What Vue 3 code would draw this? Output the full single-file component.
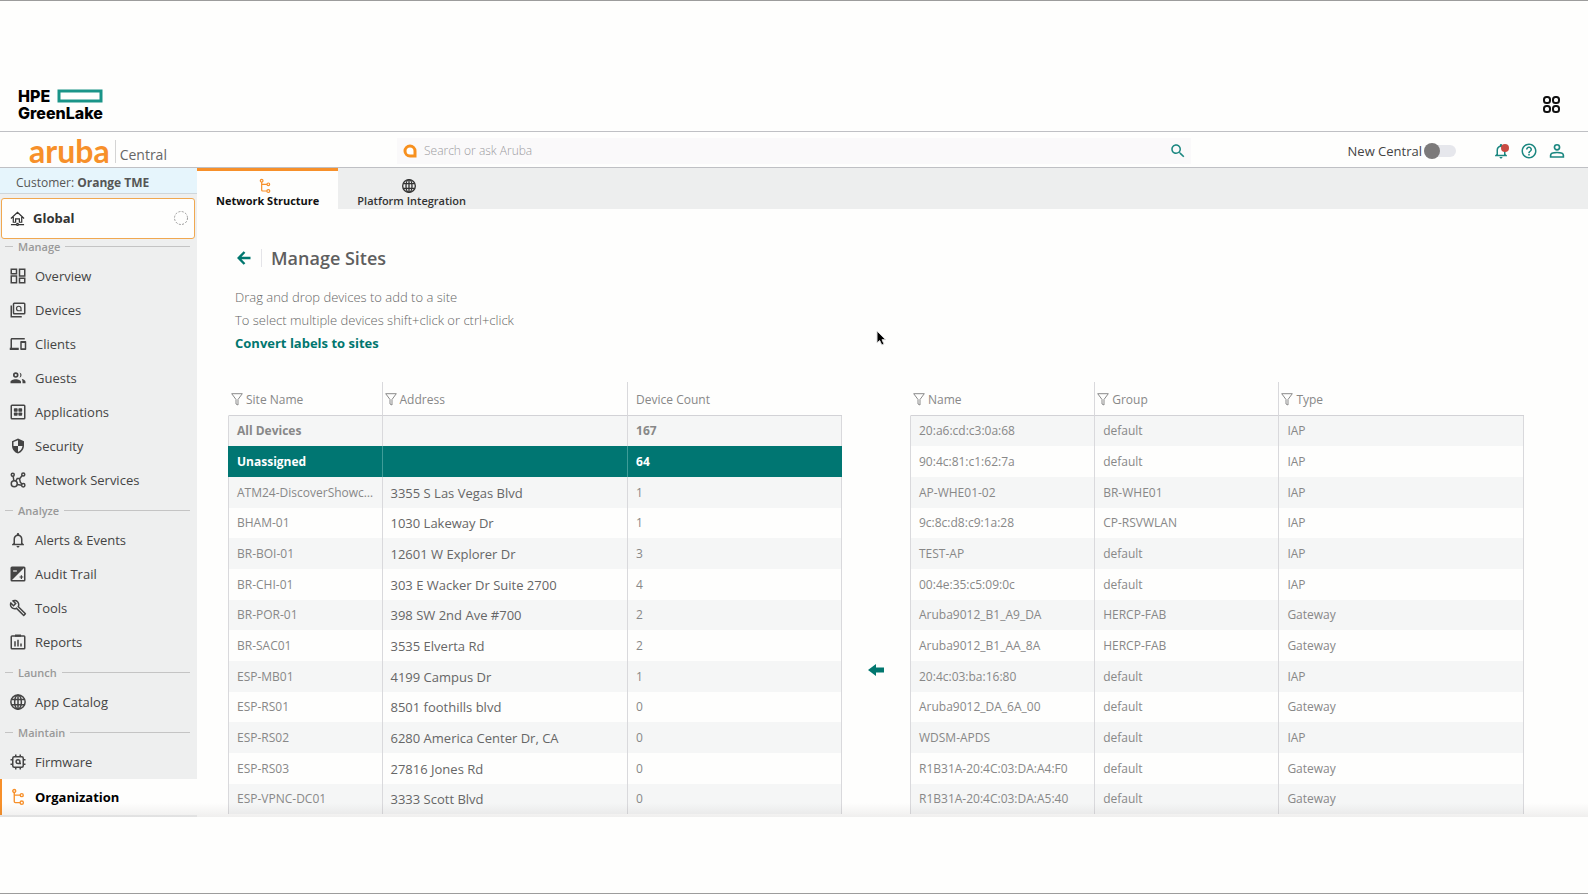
<script setup>
import { ref } from 'vue'

const icons = {
  overview: '<g fill="none" stroke="currentColor" stroke-width="2"><rect x="3" y="3" width="7" height="6"/><rect x="3" y="12" width="7" height="9"/><rect x="14" y="3" width="7" height="9"/><rect x="14" y="15" width="7" height="6"/></g>',
  devices: '<g fill="none" stroke="currentColor" stroke-width="2"><rect x="6" y="3" width="15" height="14" rx="1"/><path d="M3 6v15h14"/><path d="M16 13V10a3 3 0 1 0-3 3h4" stroke-width="1.6"/></g>',
  clients: '<path fill="currentColor" d="M4 6h17V4H4c-1.100 0-2 .9-2 2v11H1v3h12v-3H4V6zm18 2h-6c-.55 0-1 .45-1 1v10c0 .55.45 1 1 1h6c.55 0 1-.45 1-1V9c0-.55-.45-1-1-1zm-1 9.500h-4v-7h4v7z"/>',
  guests: '<circle cx="9" cy="8" r="2.600" fill="none" stroke="currentColor" stroke-width="2.200"/><path fill="currentColor" d="M2 19v-2c0-2 3.500-3.500 7-3.500s7 1.500 7 3.500v2zM14 4.500a3.600 3.600 0 0 1 0 7c1.500-2 1.500-5 0-7zM17 13.200c2.500.5 5 1.600 5 3.800v2h-4v-2c0-1.600-.4-2.900-1-3.800z"/>',
  applications: '<rect x="3" y="3" width="18" height="18" rx="1" fill="none" stroke="currentColor" stroke-width="2"/><g fill="currentColor"><rect x="6.500" y="7" width="5" height="4.500" rx="1"/><rect x="12.500" y="7" width="5" height="4.500" rx="1"/><rect x="6.500" y="12.500" width="5" height="4.500" rx="1"/><rect x="12.500" y="12.500" width="5" height="4.500" rx="1"/></g>',
  security: '<path fill="currentColor" d="M12 2L4 5.500v5.800c0 5 3.400 9.600 8 10.700 4.600-1.100 8-5.700 8-10.700V5.500L12 2zm0 10h6c-.5 3.700-2.900 6.900-6 7.900V12H6V6.800l6-2.600V12z"/>',
  network: '<g fill="none" stroke="currentColor" stroke-width="2"><circle cx="5" cy="5" r="2"/><circle cx="19" cy="4.500" r="2"/><circle cx="7" cy="17" r="4"/><circle cx="19" cy="19" r="2.200"/><path d="M5.500 7l1 6M17.500 6l-3 4H11l-2 3.500M14 10l1 5 2.500 2.500M11 18l6 1"/></g>',
  bell: '<path fill="currentColor" d="M12 22c1.100 0 2-.9 2-2h-4c0 1.100.9 2 2 2zm6-6v-5c0-3.070-1.630-5.640-4.500-6.320V4c0-.83-.67-1.500-1.500-1.500s-1.500.67-1.500 1.500v.68C7.640 5.360 6 7.920 6 11v5l-2 2v1h16v-1l-2-2zm-2 1H8v-6c0-2.480 1.510-4.500 4-4.500s4 2.020 4 4.500v6z"/>',
  audit: '<rect x="3" y="3" width="18" height="18" rx="1" fill="none" stroke="currentColor" stroke-width="2"/><path fill="currentColor" d="M3 3h18L3 21z"/><path d="M5.500 8h5" stroke="#eeefef" stroke-width="1.600"/><path d="M14 16h5M16.500 13.500v5" stroke="currentColor" stroke-width="1.600"/>',
  tools: '<path fill="currentColor" d="M22.610 18.990l-9.080-9.080c.93-2.340.45-5.100-1.440-7C9.790.61 6.210.4 3.660 2.260L7.500 6.110 6.080 7.520 2.250 3.690C.39 6.230.6 9.820 2.900 12.110c1.860 1.860 4.570 2.350 6.890 1.480l9.110 9.110c.39.39 1.020.39 1.410 0l2.300-2.300c.4-.38.4-1.010 0-1.410zm-3 1.600l-9.460-9.460c-.61.45-1.290.72-2 .82-1.360.2-2.790-.21-3.830-1.250C3.370 9.760 2.930 8.500 3 7.260l3.090 3.090 4.240-4.240-3.090-3.090c1.240-.07 2.490.37 3.440 1.310 1.080 1.080 1.490 2.570 1.240 3.960-.12.71-.42 1.370-.88 1.960l9.450 9.450-.88.89z"/>',
  reports: '<g fill="none" stroke="currentColor" stroke-width="2"><rect x="3" y="4" width="18" height="17" rx="1"/><path d="M8 11v7M12 9v9M16 14v4"/></g><path fill="currentColor" d="M8 2h8v3H8z"/>',
  globe: '<g fill="none" stroke="currentColor" stroke-width="2"><circle cx="12" cy="12" r="9.500"/><ellipse cx="12" cy="12" rx="4.500" ry="9.500"/><path d="M3.500 8.500h17M3.500 15.500h17M12 2.500v19"/></g>',
  firmware: '<g fill="none" stroke="currentColor" stroke-width="2"><rect x="5" y="5" width="14" height="14" rx="2"/><path d="M9 2v3M15 2v3M9 19v3M15 19v3M2 9h3M2 15h3M19 9h3M19 15h3M14.500 14v-2.500a2.500 2.500 0 1 0-2.500 2.500h4"/></g>',
  tree: '<g fill="none" stroke="currentColor" stroke-width="1.800"><circle cx="7" cy="4" r="2"/><circle cx="17" cy="9.500" r="2"/><circle cx="17" cy="19.500" r="2.200"/><path d="M7 6v12q0 1.500 1.500 1.500H14.800M7 9.500h8"/></g>',
  help: '<path fill="currentColor" d="M11 18h2v-2h-2v2zm1-16C6.480 2 2 6.480 2 12s4.480 10 10 10 10-4.480 10-10S17.520 2 12 2zm0 18c-4.410 0-8-3.590-8-8s3.590-8 8-8 8 3.590 8 8-3.590 8-8 8zm0-14c-2.210 0-4 1.790-4 4h2c0-1.100.9-2 2-2s2 .9 2 2c0 2-3 1.750-3 5h2c0-2.250 3-2.500 3-5 0-2.210-1.790-4-4-4z"/>',
  person: '<g fill="none" stroke="currentColor" stroke-width="2.200"><circle cx="12" cy="7" r="3.400"/><path d="M3.500 20v-2.500c0-2 4-3.500 8.500-3.500s8.500 1.500 8.500 3.500V20z"/></g>',
  search: '<path fill="currentColor" d="M15.500 14h-.79l-.28-.27C15.410 12.590 16 11.110 16 9.500 16 5.910 13.090 3 9.500 3S3 5.910 3 9.500 5.910 16 9.500 16c1.610 0 3.090-.59 4.230-1.570l.27.28v.79l5 4.990L20.490 19l-4.990-5zm-6 0C7.010 14 5 11.990 5 9.500S7.010 5 9.500 5 14 7.010 14 9.500 11.990 14 9.500 14z"/>',
}

const navGroups = [
  {
    title: 'Manage',
    items: [
      { label: 'Overview', icon: 'overview' },
      { label: 'Devices', icon: 'devices' },
      { label: 'Clients', icon: 'clients' },
      { label: 'Guests', icon: 'guests' },
      { label: 'Applications', icon: 'applications' },
      { label: 'Security', icon: 'security' },
      { label: 'Network Services', icon: 'network' },
    ],
  },
  {
    title: 'Analyze',
    items: [
      { label: 'Alerts & Events', icon: 'bell' },
      { label: 'Audit Trail', icon: 'audit' },
      { label: 'Tools', icon: 'tools' },
      { label: 'Reports', icon: 'reports' },
    ],
  },
  { title: 'Launch', items: [{ label: 'App Catalog', icon: 'globe' }] },
  {
    title: 'Maintain',
    items: [
      { label: 'Firmware', icon: 'firmware' },
      { label: 'Organization', icon: 'tree', active: true },
    ],
  },
]

const sites = [
  ['All Devices', '', '167'],
  ['Unassigned', '', '64'],
  ['ATM24-DiscoverShowcase', '3355 S Las Vegas Blvd', '1'],
  ['BHAM-01', '1030 Lakeway Dr', '1'],
  ['BR-BOI-01', '12601 W Explorer Dr', '3'],
  ['BR-CHI-01', '303 E Wacker Dr Suite 2700', '4'],
  ['BR-POR-01', '398 SW 2nd Ave #700', '2'],
  ['BR-SAC01', '3535 Elverta Rd', '2'],
  ['ESP-MB01', '4199 Campus Dr', '1'],
  ['ESP-RS01', '8501 foothills blvd', '0'],
  ['ESP-RS02', '6280 America Center Dr, CA', '0'],
  ['ESP-RS03', '27816 Jones Rd', '0'],
  ['ESP-VPNC-DC01', '3333 Scott Blvd', '0'],
]

const devices = [
  ['20:a6:cd:c3:0a:68', 'default', 'IAP'],
  ['90:4c:81:c1:62:7a', 'default', 'IAP'],
  ['AP-WHE01-02', 'BR-WHE01', 'IAP'],
  ['9c:8c:d8:c9:1a:28', 'CP-RSVWLAN', 'IAP'],
  ['TEST-AP', 'default', 'IAP'],
  ['00:4e:35:c5:09:0c', 'default', 'IAP'],
  ['Aruba9012_B1_A9_DA', 'HERCP-FAB', 'Gateway'],
  ['Aruba9012_B1_AA_8A', 'HERCP-FAB', 'Gateway'],
  ['20:4c:03:ba:16:80', 'default', 'IAP'],
  ['Aruba9012_DA_6A_00', 'default', 'Gateway'],
  ['WDSM-APDS', 'default', 'IAP'],
  ['R1B31A-20:4C:03:DA:A4:F0', 'default', 'Gateway'],
  ['R1B31A-20:4C:03:DA:A5:40', 'default', 'Gateway'],
]

const tables = [
  { id: 'sites', columns: ['Site Name', 'Address', 'Device Count'], filters: [true, true, false], rows: sites },
  { id: 'devices', columns: ['Name', 'Group', 'Type'], filters: [true, true, true], rows: devices },
]

const selectedSite = ref('Unassigned')
const newCentral = ref(false)
const query = ref('')
</script>

<template>
  <div class="page">
    <header class="greenlake">
      <a class="hpe" href="#">
        <span class="hpe-row">HPE<svg class="hpe-bar" viewBox="0 0 46 14"><rect x="2" y="2" width="42" height="10" fill="none" stroke="#1a9488" stroke-width="3" /></svg></span>
        <span>GreenLake</span>
      </a>
      <button class="icon-btn" type="button" aria-label="Applications">
        <svg class="apps" viewBox="0 0 18 18" fill="none" stroke="#111" stroke-width="2">
          <rect x="1" y="1" width="6" height="6" rx="2.500" /><rect x="10" y="1" width="6" height="6" rx="2.500" />
          <rect x="1" y="10" width="6" height="6" rx="2.500" /><rect x="10" y="10" width="6" height="6" rx="2.500" />
        </svg>
      </button>
    </header>

    <div class="topbar">
      <a class="brand" href="#"><span class="aruba">aruba</span><span class="central">Central</span></a>
      <form class="search" role="search" @submit.prevent>
        <svg class="ask" viewBox="0 0 14 14"><path d="M7 2a5 5 0 1 0 0 10h5V7a5 5 0 0 0-5-5z" fill="#fff" stroke="#f7901e" stroke-width="3" /></svg>
        <input v-model="query" type="text" placeholder="Search or ask Aruba" aria-label="Search or ask Aruba" />
        <button class="icon-btn teal" type="submit" aria-label="Search"><svg class="i18" viewBox="0 0 24 24" v-html="icons.search"></svg></button>
      </form>
      <div class="tools">
        <label class="toggle">New Central<input v-model="newCentral" type="checkbox" /></label>
        <div class="actions">
          <button class="icon-btn teal alert" type="button" aria-label="Notifications"><svg class="i18" viewBox="0 0 24 24" v-html="icons.bell"></svg><i class="dot"></i></button>
          <button class="icon-btn teal" type="button" aria-label="Help"><svg class="i18" viewBox="0 0 24 24" v-html="icons.help"></svg></button>
          <button class="icon-btn teal" type="button" aria-label="Account"><svg class="i18" viewBox="0 0 24 24" v-html="icons.person"></svg></button>
        </div>
      </div>
    </div>

    <div class="shell">
      <aside class="sidebar">
        <div class="customer">Customer: <b>Orange TME</b></div>
        <button class="scope" type="button">
          <svg class="home" viewBox="0 0 16 16" fill="none" stroke="#333" stroke-width="1.300">
            <path d="M1 8l7-6.500L15 8M3.500 6.500V12H6V8.500h4V12h2.500V6.500M1 14.500h5.500M9.500 14.500H15" /><circle cx="8" cy="14.300" r="1" />
          </svg>
          <span>Global</span>
          <svg class="ring" viewBox="0 0 16 16"><circle cx="8" cy="8" r="6.500" fill="none" stroke="#999" stroke-dasharray="2 1.400" /></svg>
        </button>
        <nav>
          <section v-for="group in navGroups" :key="group.title">
            <h2>{{ group.title }}</h2>
            <a v-for="item in group.items" :key="item.label" href="#" :class="{ active: item.active }">
              <svg class="i18" viewBox="0 0 24 24" v-html="icons[item.icon]"></svg>{{ item.label }}
            </a>
          </section>
        </nav>
      </aside>

      <main>
        <div class="tabs" role="tablist">
          <button class="tab on" type="button" role="tab" aria-selected="true"><svg class="i16" viewBox="0 0 24 24" v-html="icons.tree"></svg>Network Structure</button>
          <button class="tab" type="button" role="tab" aria-selected="false"><svg class="i16" viewBox="0 0 24 24" v-html="icons.globe"></svg>Platform Integration</button>
        </div>

        <div class="content">
          <div class="heading">
            <button class="icon-btn" type="button" aria-label="Back">
              <svg class="back" viewBox="0 0 14 14" fill="none" stroke="#01776f" stroke-width="2.400"><path d="M13.500 7H2M7.500 1L1.700 7l5.800 6" /></svg>
            </button>
            <h1>Manage Sites</h1>
          </div>
          <p>Drag and drop devices to add to a site</p>
          <p>To select multiple devices shift+click or ctrl+click</p>
          <a class="convert" href="#">Convert labels to sites</a>

          <div class="grids">
            <template v-for="(table, t) in tables" :key="table.id">
              <table :class="table.id">
                <colgroup><col /><col /><col /></colgroup>
                <thead>
                  <tr>
                    <th v-for="(name, c) in table.columns" :key="name" scope="col" :class="{ filterable: table.filters[c] }">
                      <div class="th">
                        <button v-if="table.filters[c]" class="icon-btn" type="button" :aria-label="'Filter ' + name">
                          <svg class="funnel" viewBox="0 0 12 13" fill="none" stroke="#8a8a8a"><path d="M.7.7h10.600L7 6.500V12L5 11V6.500z" /></svg>
                        </button>
                        {{ name }}
                      </div>
                    </th>
                  </tr>
                </thead>
                <tbody>
                  <tr v-for="row in table.rows" :key="row[0]" :class="{ all: row[0] === 'All Devices', selected: row[0] === selectedSite }">
                    <td v-for="(cell, c) in row" :key="c">{{ cell }}</td>
                  </tr>
                </tbody>
              </table>
              <button v-if="t === 0" class="icon-btn assign" type="button" aria-label="Assign devices to site">
                <svg class="move" viewBox="0 0 16 12"><path d="M0 6l8-6v3.500h8v5H8V12z" fill="#01776f" /></svg>
              </button>
            </template>
          </div>
        </div>
      </main>
      <div class="fade"></div>
    </div>

    <svg class="pointer" viewBox="0 0 12 18"><path d="M2 1v12l2.700-2.500L6.800 15l2.200-1-2-4.300h3.600z" fill="#000" stroke="#ddd" /></svg>
  </div>
</template>

<style>
body {
  background: #fefefd;
}
</style>

<style scoped>
* {
  box-sizing: border-box;
}
.page {
  position: relative;
  min-height: 100vh;
  border-top: 1px solid #9c9c9c;
  border-bottom: 1px solid #9c9c9c;
  font-family: "Open Sans", "Noto Sans", sans-serif;
  font-size: 13px;
  color: #444;
}
a {
  color: inherit;
  text-decoration: none;
}
button {
  font: inherit;
  color: inherit;
  cursor: pointer;
}
svg {
  display: block;
  flex: none;
}
.icon-btn {
  display: block;
  border: 0;
  padding: 0;
  background: none;
}
.i18 {
  width: 18px;
  height: 18px;
}
.i16 {
  width: 16px;
  height: 16px;
}
.teal {
  color: #1b8780;
}
.greenlake {
  display: flex;
  justify-content: space-between;
  align-items: center;
  padding: 77px 27px 0 18px;
  height: 131px;
  border-bottom: 1px solid #bfc0c4;
}
.hpe {
  display: grid;
  font: 800 16px/17px Inter, sans-serif;
  color: #000;
}
.hpe-row {
  display: flex;
  align-items: center;
  justify-content: space-between;
}
.hpe-bar {
  width: 46px;
  height: 14px;
}
.apps {
  width: 18px;
  height: 18px;
}
.topbar {
  display: grid;
  grid-template-columns: 1fr 2fr 1fr;
  align-items: center;
  height: 36px;
  padding-top: 3px;
  border-bottom: 1px solid #bfc0c4;
}
.brand {
  display: flex;
  align-items: center;
  padding-left: 29px;
}
.aruba {
  font: 700 32px/32px Lato, sans-serif;
  color: #f7902a;
  padding-right: 5px;
}
.central {
  border-left: 1px solid #d4d4d4;
  padding: 7px 0 0 4px;
  font-size: 14px;
  line-height: 16px;
  color: #666;
}
.search {
  display: flex;
  align-items: center;
  height: 26px;
  padding: 0 4px 0 6px;
  background: #faf9fa;
}
.ask {
  width: 14px;
  height: 14px;
}
.search input {
  flex: 1;
  min-width: 0;
  border: 0;
  padding: 0 7px;
  background: none;
  font: 300 12px/20px "Open Sans", sans-serif;
  outline: 0;
}
.search input::placeholder {
  color: #9a9a9e;
}
.tools {
  display: flex;
  justify-content: flex-end;
  align-items: center;
  gap: 36px;
  padding-right: 22px;
}
.toggle {
  display: flex;
  align-items: center;
  gap: 2px;
}
.toggle input {
  appearance: none;
  display: flex;
  align-items: center;
  width: 32px;
  height: 12px;
  margin: 0;
  border-radius: 6px;
  background: #e6e7ec;
}
.toggle input::before {
  content: "";
  width: 16px;
  height: 16px;
  border-radius: 50%;
  background: #7c7a7a;
}
.toggle input:checked {
  justify-content: flex-end;
}
.actions {
  display: flex;
  gap: 10px;
}
.alert {
  position: relative;
}
.dot {
  position: absolute;
  top: 2px;
  right: 1px;
  width: 8px;
  height: 8px;
  border-radius: 50%;
  background: #c84b42;
}
.shell {
  position: relative;
  display: grid;
  grid-template-columns: 197px 1fr;
}
.sidebar {
  background: #eeefef;
}
.customer {
  height: 26px;
  padding-left: 16px;
  border-bottom: 1px solid #cfd6da;
  background: #e6f5fc;
  font-size: 12px;
  line-height: 29px;
  color: #555;
}
.scope {
  display: flex;
  align-items: center;
  width: 194px;
  height: 41px;
  margin: 4px 1px 0;
  padding: 0 5px 1px 8px;
  border: 1px solid #f0a850;
  border-radius: 3px;
  background: #fefefd;
  font-weight: 700;
  color: #333;
}
.home {
  width: 15px;
  height: 15px;
}
.scope span {
  flex: 1;
  padding-left: 8px;
  text-align: left;
}
.ring {
  width: 16px;
  height: 16px;
}
nav h2 {
  display: flex;
  align-items: center;
  gap: 5px;
  height: 26px;
  margin: 0;
  padding: 0 7px 0 5px;
  font-size: 11px;
  font-weight: 600;
  color: #999;
}
nav h2::before,
nav h2::after {
  content: "";
  width: 8px;
  height: 1px;
  background: #c4c4c4;
}
nav h2::after {
  flex: 1;
}
nav section:first-child h2 {
  height: 14px;
  margin-bottom: 6px;
}
nav a {
  display: flex;
  align-items: center;
  gap: 8px;
  height: 34px;
  padding-left: 9px;
  color: #444;
}
nav a.active {
  height: 36px;
  padding-left: 7px;
  border-left: 2px solid #f7902a;
  background: #fefefd;
  font-weight: 700;
  color: #000;
}
nav a.active svg,
.tab.on svg {
  color: #f7902a;
}
.tabs {
  display: flex;
  height: 41px;
  background: #edeeee;
}
.tab {
  display: flex;
  flex-direction: column;
  align-items: center;
  padding: 7px 19px 0;
  border: 0;
  border-top: 3px solid transparent;
  background: none;
  font-size: 11px;
  font-weight: 600;
  line-height: 14px;
  color: #333;
}
.tab svg {
  margin-right: 6px;
}
.tab.on {
  border-color: #f7902a;
  background: #fefefd;
  font-weight: 700;
  color: #111;
}
.content {
  padding: 36px 64px 0 31px;
}
.heading {
  display: flex;
  align-items: center;
  gap: 10px;
  height: 26px;
  margin: 0 0 15px 9px;
}
.back {
  width: 14px;
  height: 14px;
}
h1 {
  margin: 0;
  padding-left: 9px;
  border-left: 1px solid #e4e4e8;
  font-size: 18px;
  font-weight: 600;
  line-height: 18px;
  color: #5f5f5f;
}
p,
.convert {
  display: block;
  margin: 0 0 0 7px;
  line-height: 23px;
}
p {
  font-weight: 300;
  color: #666;
}
.convert {
  width: fit-content;
  font-weight: 700;
  color: #01776f;
}
.grids {
  display: grid;
  grid-template-columns: 1fr 68px 1fr;
  align-items: start;
  margin-top: 27px;
  padding-bottom: 3px;
}
table {
  width: 100%;
  table-layout: fixed;
  border-collapse: separate;
  border-spacing: 0;
  color: #888;
}
.sites col:nth-child(1) {
  width: 25%;
}
.sites col:nth-child(2) {
  width: 40%;
}
.devices col:nth-child(1),
.devices col:nth-child(2) {
  width: 30%;
}
th {
  height: 34px;
  padding: 2px 8px 0;
  border-bottom: 1px solid #d2d2d6;
  border-left: 1px solid #d9d9dc;
  font-size: 12px;
  font-weight: 400;
  text-align: left;
  color: #888;
}
th:first-child {
  border-left-color: transparent;
}
th.filterable {
  padding: 2px 2px 0;
}
.th {
  display: flex;
  align-items: center;
  gap: 3px;
}
.funnel {
  width: 12px;
  height: 13px;
}
td {
  height: 31px;
  padding: 0 8px;
  border-left: 1px solid #d9d9dc;
  overflow: hidden;
  font-size: 12px;
  line-height: 20px;
  text-overflow: ellipsis;
  white-space: nowrap;
}
td:first-child {
  padding-right: 5px;
}
td:last-child {
  border-right: 1px solid #d9d9dc;
}
.sites td:nth-child(2) {
  font-size: 13px;
  color: #666;
}
tr:nth-child(3n + 1) td {
  height: 30px;
}
tbody tr:nth-child(odd) {
  background: #f5f6f6;
}
.all td,
.selected td {
  font-weight: 700;
}
tbody tr.selected {
  background: #007672;
  color: #fff;
}
.selected td {
  border-color: #3f9c98;
}
.selected td:first-child {
  border-left-color: #007672;
}
.selected td:last-child {
  border-right-color: #007672;
}
.assign {
  place-self: center;
  padding-top: 143px;
}
.move {
  width: 16px;
  height: 12px;
}
.fade {
  position: absolute;
  inset: auto 0 0;
  height: 14px;
  background: linear-gradient(to bottom, transparent, rgba(70, 60, 60, 0.08));
  pointer-events: none;
}
.pointer {
  position: absolute;
  top: 329px;
  left: 875px;
  width: 12px;
  height: 18px;
}
</style>
